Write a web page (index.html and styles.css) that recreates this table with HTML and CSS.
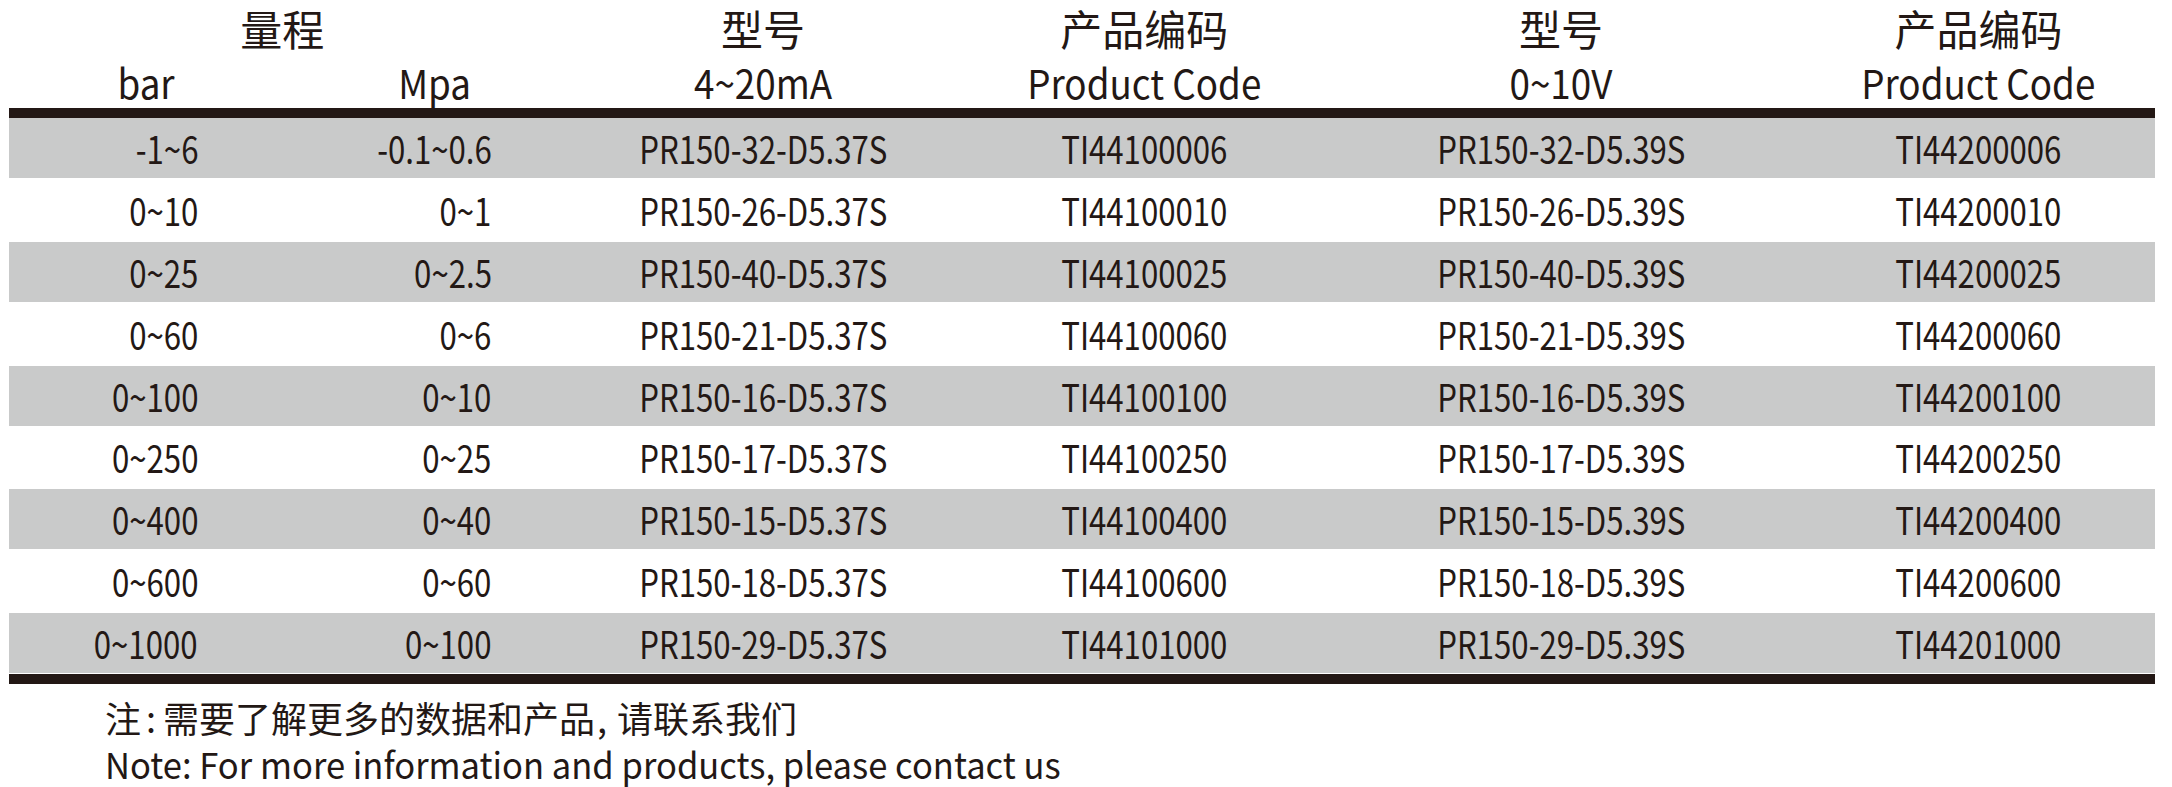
FILE: index.html
```html
<!DOCTYPE html>
<html lang="zh-CN">
<head>
<meta charset="utf-8">
<title>量程 / 型号 / 产品编码</title>
<link rel="stylesheet" href="styles.css">
</head>
<body>
<div class="sheet">
  <div class="head">
    <div class="h-cn range">量程</div>
    <div class="h-cn c3">型号</div>
    <div class="h-cn c4">产品编码</div>
    <div class="h-cn c5">型号</div>
    <div class="h-cn c6">产品编码</div>
    <div class="h-en c1"><span>bar</span></div>
    <div class="h-en c2"><span>Mpa</span></div>
    <div class="h-en c3"><span>4~20mA</span></div>
    <div class="h-en c4"><span>Product Code</span></div>
    <div class="h-en c5"><span>0~10V</span></div>
    <div class="h-en c6"><span>Product Code</span></div>
  </div>
  <div class="rule"></div>
  <div class="rows">
    <div class="row alt"><div class="d c1"><span>-1~6</span></div><div class="d c2"><span>-0.1~0.6</span></div><div class="d c3"><span>PR150-32-D5.37S</span></div><div class="d c4"><span>TI44100006</span></div><div class="d c5"><span>PR150-32-D5.39S</span></div><div class="d c6"><span>TI44200006</span></div></div>
    <div class="row"><div class="d c1"><span>0~10</span></div><div class="d c2"><span>0~1</span></div><div class="d c3"><span>PR150-26-D5.37S</span></div><div class="d c4"><span>TI44100010</span></div><div class="d c5"><span>PR150-26-D5.39S</span></div><div class="d c6"><span>TI44200010</span></div></div>
    <div class="row alt"><div class="d c1"><span>0~25</span></div><div class="d c2"><span>0~2.5</span></div><div class="d c3"><span>PR150-40-D5.37S</span></div><div class="d c4"><span>TI44100025</span></div><div class="d c5"><span>PR150-40-D5.39S</span></div><div class="d c6"><span>TI44200025</span></div></div>
    <div class="row"><div class="d c1"><span>0~60</span></div><div class="d c2"><span>0~6</span></div><div class="d c3"><span>PR150-21-D5.37S</span></div><div class="d c4"><span>TI44100060</span></div><div class="d c5"><span>PR150-21-D5.39S</span></div><div class="d c6"><span>TI44200060</span></div></div>
    <div class="row alt"><div class="d c1"><span>0~100</span></div><div class="d c2"><span>0~10</span></div><div class="d c3"><span>PR150-16-D5.37S</span></div><div class="d c4"><span>TI44100100</span></div><div class="d c5"><span>PR150-16-D5.39S</span></div><div class="d c6"><span>TI44200100</span></div></div>
    <div class="row"><div class="d c1"><span>0~250</span></div><div class="d c2"><span>0~25</span></div><div class="d c3"><span>PR150-17-D5.37S</span></div><div class="d c4"><span>TI44100250</span></div><div class="d c5"><span>PR150-17-D5.39S</span></div><div class="d c6"><span>TI44200250</span></div></div>
    <div class="row alt"><div class="d c1"><span>0~400</span></div><div class="d c2"><span>0~40</span></div><div class="d c3"><span>PR150-15-D5.37S</span></div><div class="d c4"><span>TI44100400</span></div><div class="d c5"><span>PR150-15-D5.39S</span></div><div class="d c6"><span>TI44200400</span></div></div>
    <div class="row"><div class="d c1"><span>0~600</span></div><div class="d c2"><span>0~60</span></div><div class="d c3"><span>PR150-18-D5.37S</span></div><div class="d c4"><span>TI44100600</span></div><div class="d c5"><span>PR150-18-D5.39S</span></div><div class="d c6"><span>TI44200600</span></div></div>
    <div class="row alt"><div class="d c1"><span>0~1000</span></div><div class="d c2"><span>0~100</span></div><div class="d c3"><span>PR150-29-D5.37S</span></div><div class="d c4"><span>TI44101000</span></div><div class="d c5"><span>PR150-29-D5.39S</span></div><div class="d c6"><span>TI44201000</span></div></div>
  </div>
  <div class="rule bottom"></div>
  <div class="note">
    <p class="note-cn">注<span class="colon">:</span>需要了解更多的数据和产品<span class="comma">,</span>请联系我们</p>
    <p class="note-en"><span>Note: For more information and products, please contact us</span></p>
  </div>
</div>
</body>
</html>
```
FILE: styles.css
```css
html, body {
  margin: 0;
  padding: 0;
  background: #ffffff;
}
body {
  font-family: "Noto Sans CJK SC", "Noto Sans", sans-serif;
  color: #231815;
  width: 2172px;
  height: 787px;
  overflow: hidden;
}
.sheet {
  margin-left: 9px;
  width: 2146px;
}
.head, .row {
  display: grid;
  grid-template-columns: 282px 310.5px 357px 401.5px 418px 377px;
}
.head {
  grid-template-rows: 56px 52px;
  height: 108px;
}
.h-cn {
  font-size: 42px;
  line-height: 56px;
  text-align: center;
  grid-row: 1;
}
.h-en {
  font-size: 40px;
  line-height: 52px;
  text-align: center;
  grid-row: 2;
  white-space: nowrap;
}
.h-en span {
  display: inline-block;
  transform: scaleX(0.92);
}
.range { grid-column: 1 / 3; padding-right: 46px; }
.c1 { grid-column: 1; }
.c2 { grid-column: 2; }
.c3 { grid-column: 3; padding-right: 34px; }
.c4 { grid-column: 4; padding-right: 30px; }
.c5 { grid-column: 5; padding-right: 16px; }
.c6 { grid-column: 6; padding-left: 24px; }
.h-en.c1 { padding-right: 8px; }
.h-en.c2 { padding-right: 23px; }
.rule {
  height: 10px;
  background: #231815;
}
.rule.bottom {
  margin-top: 1px;
}
.row {
  height: 63.75px;
  align-items: center;
}
.row.alt {
  height: 60px;
  background: #c9caca;
}
.d {
  font-size: 38px;
  line-height: 1;
  text-align: center;
  white-space: nowrap;
}
.d span {
  display: inline-block;
  transform: scaleX(0.82);
}
.d.c1, .d.c2 { text-align: right; }
.d.c1 span, .d.c2 span { transform-origin: right center; }
.d.c1 { padding-right: 93px; }
.d.c2 { padding-right: 110px; }
.note {
  margin-left: 96px;
  padding-top: 10px;
}
.note p {
  margin: 0;
  font-size: 36px;
  line-height: 46px;
  white-space: nowrap;
}
.colon {
  padding: 0 7px 0 5px;
}
.comma {
  padding: 0 10px 0 2px;
}
.note-en span {
  display: inline-block;
  transform: scaleX(0.96);
  transform-origin: left center;
}
```
